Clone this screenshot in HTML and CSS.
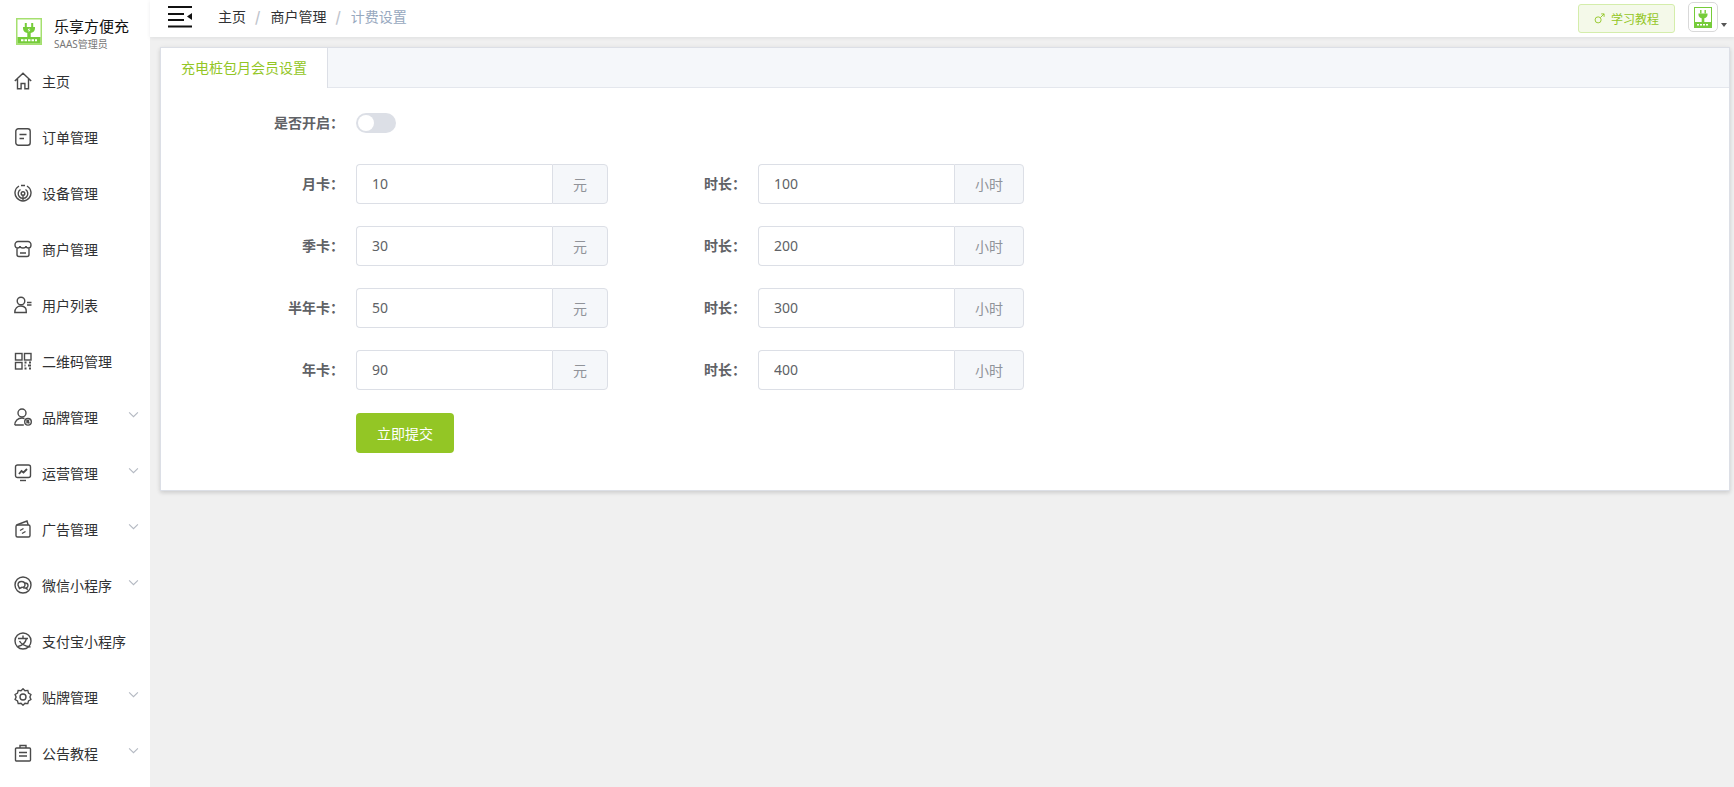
FILE: index.html
```html
<!DOCTYPE html>
<html lang="zh-CN">
<head>
<meta charset="utf-8">
<title>计费设置</title>
<link rel="stylesheet" href="styles.css">
</head>
<body>
<div class="app">
  <aside class="sidebar">
    <div class="brand">
      <svg class="brand-logo" viewBox="0 0 26 27"><rect x=".75" y=".75" width="24.500" height="25.500" fill="#fff" stroke="#a5e06f" stroke-width="1.500"/><rect x="1.500" y="19" width="23" height="6.500" fill="#76cc3a"/><path d="M9.800 5v4.500M16.200 5v4.500" stroke="#76cc3a" stroke-width="2"/><path d="M7 9h12v1.500c0 2.800-2.300 4.200-4.300 4.500V19h-3.400v-4C9.300 14.700 7 13.300 7 10.500z" fill="#76cc3a"/><path d="M13.500 9.800l-2 2.500h1.400l-.4 2 2-2.500h-1.400z" fill="#fff"/><path d="M5 22.300h16" stroke="#fff" stroke-width="2" stroke-dasharray="2.500 1"/></svg>
      <div class="brand-text">
        <div class="brand-name">乐享方便充</div>
        <div class="brand-role">SAAS管理员</div>
      </div>
    </div>
    <nav class="menu">
      <a class="menu-item"><svg class="icon" viewBox="0 0 18 18"><path d="M.8 9L9 1.300 17.200 9M3.500 7v9.700h3.600v-5.200h3.800v5.200h3.600V7"/></svg><span>主页</span></a>
      <a class="menu-item"><svg class="icon" viewBox="0 0 18 18"><rect x="1.800" y=".8" width="14.400" height="16.400" rx="2.500"/><path d="M5.500 6.500h7M5.500 10.500h4.500"/></svg><span>订单管理</span></a>
      <a class="menu-item"><svg class="icon" viewBox="0 0 18 18"><path d="M5 2a8 8 0 1 0 8 0"/><path d="M6.500 5.500a4.800 4.800 0 1 0 5 0"/><circle cx="9" cy="9.500" r="1.800"/><path d="M9 11.300V16.500M7 1.500h4"/></svg><span>设备管理</span></a>
      <a class="menu-item"><svg class="icon" viewBox="0 0 18 18"><path d="M4 1.500h10c1.500 0 3 1.500 3 3.500 0 1.800-1.200 3-2.500 3S12 7 12 6c0 1-1.300 2-3 2S6 7 6 6c0 1-1.200 2-2.500 2S1 6.800 1 5c0-2 1.500-3.500 3-3.500zM3 8v6.500A2 2 0 0 0 5 16.500h8a2 2 0 0 0 2-2V8M6 13h6"/></svg><span>商户管理</span></a>
      <a class="menu-item"><svg class="icon" viewBox="0 0 18 18"><circle cx="7" cy="5" r="3.800"/><path d="M.8 16.500c0-4 2.500-6.500 6.200-6.500 2 0 3.500.8 4.500 2 .6.800.8 3 .8 4.500zM13 6.500h4.500M13 9h4.500"/></svg><span>用户列表</span></a>
      <a class="menu-item"><svg class="icon" viewBox="0 0 18 18"><rect x="1.500" y="1.500" width="6.500" height="6.500"/><rect x="10.500" y="1.500" width="6.500" height="6.500"/><rect x="1.500" y="10.500" width="6.500" height="6.500"/><path d="M10.500 10.500h2M15 10.500h2M10.500 13.500h1M14 13.500h3M10.500 16.500h2M15 16.500h2" stroke-width="1.800"/></svg><span>二维码管理</span></a>
      <a class="menu-item"><svg class="icon" viewBox="0 0 18 18"><circle cx="8" cy="5" r="4"/><path d="M.8 17c0-4 3-7 7.200-7 1 0 1.800.2 2.500.5M.8 17h9"/><circle cx="14" cy="13.800" r="3.300"/><path d="M13 12v3.500M13 12.500h1.500v1.500H13M14.300 14l1 1.500"/></svg><span>品牌管理</span><svg class="chevron" viewBox="0 0 10 6"><path d="M1 1l4 4 4-4"/></svg></a>
      <a class="menu-item"><svg class="icon" viewBox="0 0 18 18"><rect x="1.500" y="1" width="15" height="12.500" rx="2"/><path d="M5 10l2.500-3 2 1.500L13 5" stroke-width="1.800"/><path d="M6 16.500h6"/></svg><span>运营管理</span><svg class="chevron" viewBox="0 0 10 6"><path d="M1 1l4 4 4-4"/></svg></a>
      <a class="menu-item"><svg class="icon" viewBox="0 0 18 18"><path d="M2.500 5L13 1l1.200 4"/><rect x="2" y="5" width="14" height="12" rx="1.500"/><path d="M6 10.500l3.500-2M8 13.500l3.500-2"/></svg><span>广告管理</span><svg class="chevron" viewBox="0 0 10 6"><path d="M1 1l4 4 4-4"/></svg></a>
      <a class="menu-item"><svg class="icon" viewBox="0 0 18 18"><circle cx="9" cy="9" r="8"/><path d="M4 9c0-2 1.500-3.500 3.500-3.500S11 7 11 9c0 1.500-1.500 2.500-3 2.300L5.500 12.500z"/><path d="M11 7c1.500 0 3 1 3 2.500 0 1-.6 1.800-1.300 2.200l.3 1.300-1.800-1-2.200-.2"/></svg><span>微信小程序</span><svg class="chevron" viewBox="0 0 10 6"><path d="M1 1l4 4 4-4"/></svg></a>
      <a class="menu-item"><svg class="icon" viewBox="0 0 18 18"><circle cx="9" cy="9" r="8"/><path d="M4 6.500h10M9 3.500v3M12.500 6.500c-1 4-4 7-8.500 8M5.500 9c1.500 3 5 5 11 6"/></svg><span>支付宝小程序</span></a>
      <a class="menu-item"><svg class="icon" viewBox="0 0 18 18"><path d="M9 .8l2 1.900 2.800-.3.700 2.700 2.400 1.400-1 2.500 1 2.500-2.400 1.400-.7 2.700-2.800-.3L9 17.200l-2-1.900-2.800.3-.7-2.700-2.400-1.400 1-2.500-1-2.500 2.400-1.400.7-2.700 2.800.3z"/><circle cx="9" cy="9" r="3"/></svg><span>贴牌管理</span><svg class="chevron" viewBox="0 0 10 6"><path d="M1 1l4 4 4-4"/></svg></a>
      <a class="menu-item"><svg class="icon" viewBox="0 0 18 18"><rect x="1.500" y="4" width="15" height="13" rx="1"/><path d="M6 4V1.500h6V4M5 8.500h8M5 12h8"/></svg><span>公告教程</span><svg class="chevron" viewBox="0 0 10 6"><path d="M1 1l4 4 4-4"/></svg></a>
    </nav>
  </aside>

  <div class="main">
    <header class="navbar">
      <svg class="hamburger" viewBox="0 0 24 22"><path d="M0 1h24M0 8h16M0 14h16M0 20.500h24" stroke="#111" stroke-width="2"/><path d="M24 7v7l-5-3.500z" fill="#111"/></svg>
      <ol class="breadcrumb">
        <li>主页</li>
        <li class="sep">/</li>
        <li>商户管理</li>
        <li class="sep">/</li>
        <li class="current">计费设置</li>
      </ol>
      <div class="nav-right">
        <button class="learn-btn" type="button"><svg class="male" viewBox="0 0 12 12"><circle cx="4.500" cy="7.500" r="3.300"/><path d="M7 5l4-4M7.800 1H11v3.200"/></svg>学习教程</button>
        <div class="avatar"><svg viewBox="0 0 18 21"><rect x=".5" y=".5" width="17" height="20" fill="#fff" stroke="#76cc3a"/><rect x="1" y="15" width="16" height="5.500" fill="#76cc3a"/><path d="M6.800 3v3.500M11.200 3v3.500" stroke="#76cc3a" stroke-width="1.400"/><path d="M4.500 6.500h9v1.500c0 2-2 3-3.200 3.200V15H7.700v-3.800C6.500 11 4.500 10 4.500 8z" fill="#76cc3a"/><path d="M3 17.700h12" stroke="#fff" stroke-width="1.500" stroke-dasharray="2 1"/></svg></div>
        <span class="caret"></span>
      </div>
    </header>

    <section class="content">
      <div class="card">
        <div class="tabs">
          <div class="tab">充电桩包月会员设置</div>
        </div>
        <form class="form">
          <div class="switch-row">
            <label class="label">是否开启：</label>
            <span class="switch"><span class="knob"></span></span>
          </div>
          <div class="price-grid">
            <div class="field"><label class="label">月卡：</label><div class="group group-price"><input class="input" value="10"><span class="addon">元</span></div></div>
            <div class="field"><label class="label">时长：</label><div class="group group-hours"><input class="input" value="100"><span class="addon addon-wide">小时</span></div></div>
            <div class="field"><label class="label">季卡：</label><div class="group group-price"><input class="input" value="30"><span class="addon">元</span></div></div>
            <div class="field"><label class="label">时长：</label><div class="group group-hours"><input class="input" value="200"><span class="addon addon-wide">小时</span></div></div>
            <div class="field"><label class="label">半年卡：</label><div class="group group-price"><input class="input" value="50"><span class="addon">元</span></div></div>
            <div class="field"><label class="label">时长：</label><div class="group group-hours"><input class="input" value="300"><span class="addon addon-wide">小时</span></div></div>
            <div class="field"><label class="label">年卡：</label><div class="group group-price"><input class="input" value="90"><span class="addon">元</span></div></div>
            <div class="field"><label class="label">时长：</label><div class="group group-hours"><input class="input" value="400"><span class="addon addon-wide">小时</span></div></div>
          </div>
          <div class="actions"><button class="submit" type="button">立即提交</button></div>
        </form>
      </div>
    </section>
  </div>
</div>
</body>
</html>
```
FILE: styles.css
```css
* { box-sizing: border-box; }
html, body { margin: 0; height: 100%; overflow: hidden; }
body {
  font-family: "Noto Sans CJK SC", "Noto Sans", sans-serif;
  font-size: 14px;
  color: #303133;
  background: #f0f0f0;
}
.app { display: flex; height: 787px; }

.sidebar {
  flex: 0 0 150px;
  background: #fff;
  display: flex;
  flex-direction: column;
}
.brand {
  height: 53px;
  padding: 18px 0 0 16px;
  display: flex;
  gap: 12px;
}
.brand-logo { width: 26px; height: 27px; flex: none; }
.brand-name { font-size: 15px; line-height: 18px; margin-top: -1px; color: #111; }
.brand-role { font-family: "Noto Sans", "Noto Sans CJK SC", sans-serif; font-size: 10px; line-height: 14px; margin-top: 2px; color: #777; }
.menu { display: flex; flex-direction: column; }
.menu-item {
  height: 56px;
  display: flex;
  align-items: center;
  padding-left: 14px;
  color: #303133;
  position: relative;
}
.menu-item span { margin: 0 0 1px 10px; line-height: 20px; }
.icon {
  width: 18px;
  height: 18px;
  flex: none;
  fill: none;
  stroke: #4a4a4a;
  stroke-width: 1.400;
}
.chevron {
  position: absolute;
  left: 128px;
  top: 22px;
  width: 11px;
  height: 7px;
  fill: none;
  stroke: #b4b9c2;
  stroke-width: 1;
}

.main { flex: 1; display: flex; flex-direction: column; min-width: 0; }
.navbar {
  height: 37px;
  background: #fff;
  box-shadow: 0 1px 4px rgba(0, 21, 41, .08);
  display: flex;
  align-items: center;
  padding: 0 7px 0 18px;
}
.hamburger { width: 24px; height: 22px; margin-top: -4px; flex: none; }
.breadcrumb {
  list-style: none;
  margin: 0 0 6px 26px;
  padding: 0;
  display: flex;
  gap: 9px;
  line-height: 20px;
}
.breadcrumb .sep { color: #c0c4cc; font-weight: 700; margin-right: 1px; }
.breadcrumb .current { color: #97a8be; }
.nav-right { margin-left: auto; display: flex; align-items: flex-start; height: 37px; }
.learn-btn {
  width: 97px;
  height: 29px;
  margin-top: 4px;
  border: 1px solid #d4edab;
  border-radius: 3px;
  background: #f4f9e9;
  color: #93c625;
  font: inherit;
  font-size: 12px;
  display: flex;
  align-items: center;
  justify-content: center;
  gap: 6px;
  padding: 0;
}
.male { width: 11px; height: 11px; fill: none; stroke: #93c625; stroke-width: 1; }
.avatar {
  width: 30px;
  height: 30px;
  margin: 2px 0 0 13px;
  border: 1px solid #d9d9d9;
  border-radius: 5px;
  background: #fff;
  display: flex;
  align-items: center;
  justify-content: center;
}
.avatar svg { width: 18px; height: 21px; }
.caret {
  width: 0;
  height: 0;
  margin: 23px 0 0 3px;
  border: 3.500px solid transparent;
  border-top: 4px solid #555;
  border-bottom: 0;
}

.content { flex: 1; padding: 10px 4px 0 10px; }
.card {
  height: 444px;
  background: #fff;
  border: 1px solid #dcdfe6;
  box-shadow: 0 2px 4px rgba(0, 0, 0, .12), 0 0 6px rgba(0, 0, 0, .04);
}
.tabs {
  height: 40px;
  background: #f5f7fa;
  border-bottom: 1px solid #e4e7ed;
  display: flex;
}
.tab {
  height: 40px;
  padding: 0 20px;
  line-height: 38px;
  background: #fff;
  color: #93c625;
  border-right: 1px solid #dcdfe6;
}
.form { padding: 25px 0 0 83px; }
.label {
  flex: 0 0 100px;
  width: 100px;
  margin-bottom: 2px;
  text-align: right;
  font-weight: 700;
  color: #606266;
  white-space: nowrap;
}
.switch-row { display: flex; align-items: center; height: 20px; gap: 12px; margin-bottom: 31px; }
.switch {
  width: 40px;
  height: 20px;
  border-radius: 10px;
  background: #dcdfe6;
  padding: 2px;
  display: block;
}
.knob { display: block; width: 16px; height: 16px; border-radius: 50%; background: #fff; }
.price-grid {
  display: grid;
  grid-template-columns: 364px 378px;
  grid-auto-rows: 40px;
  row-gap: 22px;
  column-gap: 38px;
  width: max-content;
}
.field { display: flex; align-items: center; gap: 12px; }
.group { display: flex; height: 40px; }
.group-price { width: 252px; }
.group-hours { width: 266px; }
.input {
  flex: 1;
  min-width: 0;
  height: 40px;
  border: 1px solid #dcdfe6;
  border-right: 0;
  border-radius: 4px 0 0 4px;
  padding: 0 15px 2px;
  font: inherit;
  font-family: "Noto Sans", sans-serif;
  color: #606266;
  background: #fff;
  outline: none;
}
.addon {
  flex: 0 0 56px;
  border: 1px solid #dcdfe6;
  border-radius: 0 4px 4px 0;
  background: #f5f7fa;
  color: #909399;
  display: flex;
  align-items: center;
  justify-content: center;
}
.addon-wide { flex-basis: 70px; }
.actions { padding: 23px 0 0 112px; }
.submit {
  display: block;
  width: 98px;
  height: 40px;
  border: 0;
  border-radius: 4px;
  background: #93c625;
  color: #fff;
  font: inherit;
}
```
